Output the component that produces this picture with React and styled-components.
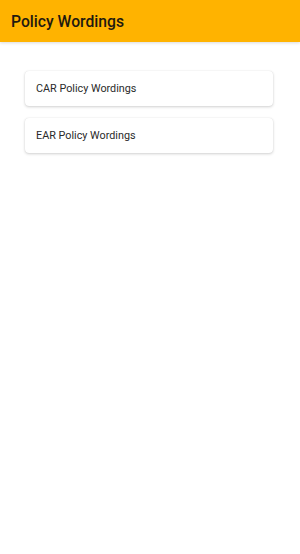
import React from "react";
import styled, { createGlobalStyle } from "styled-components";

const GlobalStyle = createGlobalStyle`
  html, body { margin: 0; padding: 0; background: #ffffff; }
  body { font-family: Roboto, "Noto Sans", sans-serif; }
  * { box-sizing: border-box; }
`;

const Page = styled.div`
  width: 300px;
  min-height: 554px;
  background: #ffffff;
`;

const Toolbar = styled.header`
  height: 42px;
  background: #ffb300;
  display: flex;
  align-items: center;
  padding: 0 11px;
  box-shadow: 0 1px 3px rgba(0, 0, 0, 0.15);
`;

const Title = styled.h1`
  margin: 0;
  font-size: 15.7px;
  font-weight: 500;
  color: #1f1a10;
`;

const List = styled.div`
  display: flex;
  flex-direction: column;
  gap: 12px;
  padding: 29px 27px 0 25px;
`;

const Card = styled.div`
  height: 35px;
  background: #ffffff;
  border-radius: 4px;
  box-shadow: 0 1px 3px rgba(0, 0, 0, 0.18), 0 0 1px rgba(0, 0, 0, 0.12);
  display: flex;
  align-items: center;
  padding: 0 11px;
  font-size: 10.8px;
  color: #2a2a2a;
`;

export default function App() {
  const items = ["CAR Policy Wordings", "EAR Policy Wordings"];
  return (
    <Page>
      <GlobalStyle />
      <Toolbar>
        <Title>Policy Wordings</Title>
      </Toolbar>
      <List>
        {items.map((t) => (
          <Card key={t}>{t}</Card>
        ))}
      </List>
    </Page>
  );
}
